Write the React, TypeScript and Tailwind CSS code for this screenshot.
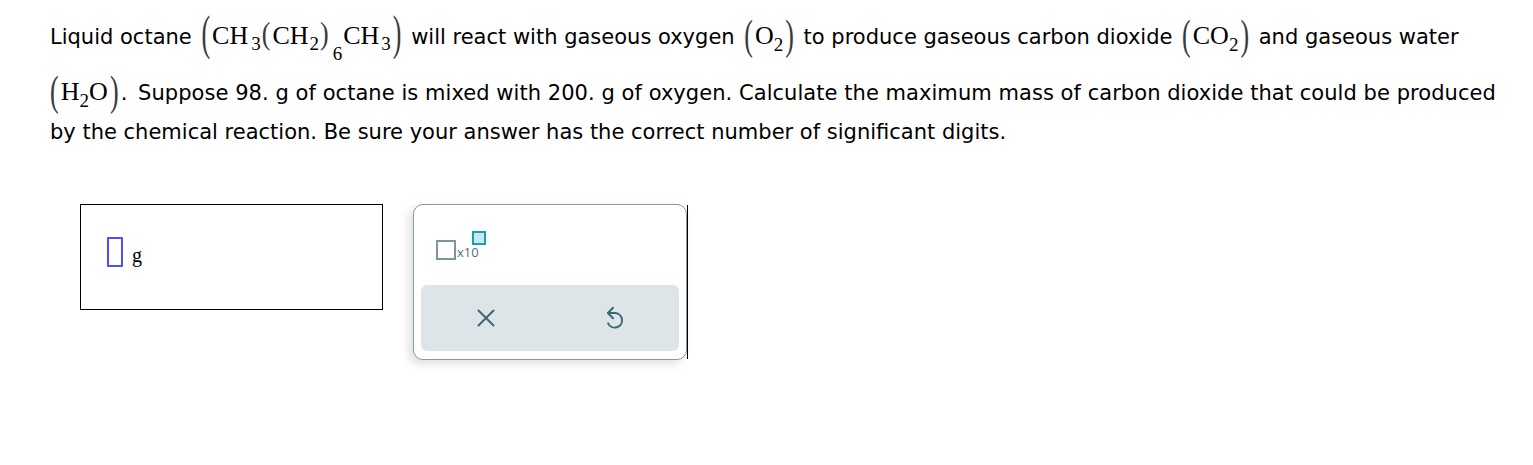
import React from "react";

const Paren = ({ c, cls }: { c: string; cls: string }) => (
  <span className={`inline-block leading-none text-[#3a3a3a] font-light ${cls}`}>{c}</span>
);

const Sub = ({ c, cls }: { c: string; cls: string }) => (
  <span className={`relative text-[19px] leading-none ${cls}`}>{c}</span>
);

const Math = ({ children, m }: { children: React.ReactNode; m: string }) => (
  <span className={`inline-flex items-baseline leading-none font-['Liberation_Serif',serif] text-[26px] ${m}`}>
    {children}
  </span>
);

function Octane() {
  return (
    <Math m="mx-[3px]">
      <Paren c="(" cls="scale-y-[1.85] -translate-y-[1.5px] mr-[2px]" />
      <span>CH</span>
      <Sub c="3" cls="top-[6px] ml-[3px]" />
      <Paren c="(" cls="scale-y-[1.2] -translate-y-[2px] ml-[1px] mr-[2px]" />
      <span>CH</span>
      <Sub c="2" cls="top-[6px] ml-[1px]" />
      <Paren c=")" cls="scale-y-[1.2] -translate-y-[2px] ml-[1px]" />
      <Sub c="6" cls="top-[16px] ml-[4px] mr-[1px]" />
      <span>CH</span>
      <Sub c="3" cls="top-[6px] ml-[2px]" />
      <Paren c=")" cls="scale-y-[1.85] -translate-y-[1.5px] ml-[2px]" />
    </Math>
  );
}

function Simple({ a, sub, b, m }: { a: string; sub: string; b?: string; m: string }) {
  return (
    <Math m={m}>
      <Paren c="(" cls="scale-y-[1.6] mr-[2px]" />
      <span>{a}</span>
      <Sub c={sub} cls="top-[7px]" />
      {b ? <span>{b}</span> : null}
      <Paren c=")" cls="scale-y-[1.6] ml-[2px]" />
    </Math>
  );
}

export default function App() {
  return (
    <div className="w-[1533px] h-[465px] bg-white text-black font-['DejaVu_Sans',Verdana,sans-serif] text-[21px] overflow-hidden">
      <div className="pl-[50px] pt-[17px]">
        <div className="h-[57px] leading-[40px] whitespace-nowrap">
          Liquid octane <Octane /> will react with gaseous oxygen <Simple a="O" sub="2" m="mx-[3px]" /> to produce gaseous carbon dioxide{" "}
          <Simple a="CO" sub="2" m="mx-[3px]" /> and gaseous water
        </div>
        <div className="leading-[39px] whitespace-nowrap tracking-[0.05px]">
          <Simple a="H" sub="2" b="O" m="mr-[2px]" />
          <span className="mr-[4px]">.</span> Suppose 98. g of octane is mixed with 200. g of oxygen. Calculate the maximum mass of carbon dioxide that could be produced
        </div>
        <div className="leading-[39px] whitespace-nowrap">
          by the chemical reaction. Be sure your answer has the correct number of significant digits.
        </div>
      </div>

      <div className="flex items-start pl-[80px] mt-[52px]">
        <div className="w-[303px] h-[106px] border border-black flex items-start pl-[26px] pt-[32px]">
          <div className="w-[16px] h-[30px] border-2 border-[#4d4dff] rounded-[1px]" />
          <span className="ml-[9px] mt-[8px] leading-none text-[20px] font-['Liberation_Serif',serif]">g</span>
        </div>

        <div className="ml-[30px] flex items-center">
          <div className="w-[274px] h-[156px] border border-[#829ba4] rounded-[10px] bg-white shadow-[-4px_4px_10px_rgba(0,0,0,0.13)] flex flex-col">
            <div className="h-[80px] pl-[22px] pt-[33px]">
              <div className="relative inline-flex items-end">
                <div className="w-[20px] h-[20px] border-2 border-[#7d959e]" />
                <span className="ml-[1px] text-[13px] leading-none text-[#4f6f7a] font-['Open_Sans',sans-serif] mb-[1px]">x10</span>
                <div className="absolute left-[36px] -top-[9px] w-[14px] h-[14px] border-2 border-[#17a0b8] bg-[#c9e9f0]" />
              </div>
            </div>
            <div className="mx-[7px] h-[66px] rounded-[6px] bg-[#dee5e8] grid grid-cols-2 items-center">
              <div className="flex justify-center">
                <svg width="18" height="18" viewBox="0 0 18 18" fill="none" stroke="#3f6672" strokeWidth="2" strokeLinecap="round">
                  <line x1="1.5" y1="1.5" x2="16.5" y2="16.5" />
                  <line x1="16.5" y1="1.5" x2="1.5" y2="16.5" />
                </svg>
              </div>
              <div className="flex justify-center">
                <svg width="20" height="24" viewBox="0 0 20 24" fill="none" stroke="#3f6672" strokeWidth="2" strokeLinecap="round" strokeLinejoin="round">
                  <path d="M3 7 H10 A7.3 7.3 0 1 1 3.1 17.3" />
                  <path d="M8 1.8 L3 7 L8 12.2" />
                </svg>
              </div>
            </div>
          </div>
          <div className="w-[1px] h-[154px] bg-black" />
        </div>
      </div>
    </div>
  );
}
